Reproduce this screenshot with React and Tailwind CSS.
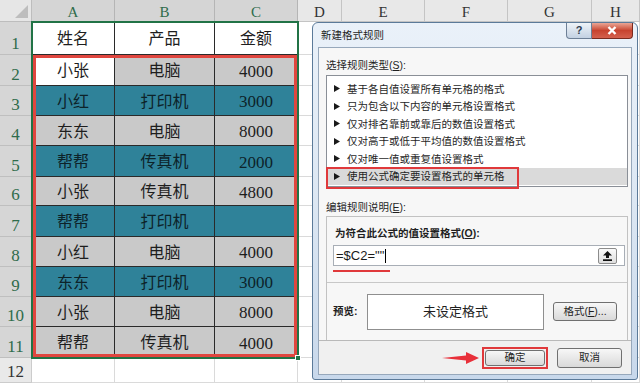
const COLS = [
  { k: 'A', w: 'w-[83px]', sel: true },
  { k: 'B', w: 'w-[100px]', sel: true },
  { k: 'C', w: 'w-[83px]', sel: true },
  { k: 'D', w: 'w-[44px]' },
  { k: 'E', w: 'w-[83px]' },
  { k: 'F', w: 'w-[83px]' },
  { k: 'G', w: 'w-[84px]' },
  { k: 'H', w: 'w-[48px]' },
]

// heights of rows 1..12
const ROW_H = ['h-[33px]', 'h-[31px]', 'h-[30px]', 'h-[30px]', 'h-[31px]', 'h-[29px]', 'h-[31px]', 'h-[30px]', 'h-[30px]', 'h-[30px]', 'h-[31px]', 'h-[25px]']

const DATA = [
  ['姓名', '产品', '金额'],
  ['小张', '电脑', '4000'],
  ['小红', '打印机', '3000'],
  ['东东', '电脑', '8000'],
  ['帮帮', '传真机', '2000'],
  ['小张', '传真机', '4800'],
  ['帮帮', '打印机', ''],
  ['小红', '电脑', '4000'],
  ['东东', '打印机', '3000'],
  ['小张', '电脑', '8000'],
  ['帮帮', '传真机', '4000'],
]

const TEAL_ROWS = [3, 5, 7, 9]

const RULES = [
  '基于各自值设置所有单元格的格式',
  '只为包含以下内容的单元格设置格式',
  '仅对排名靠前或靠后的数值设置格式',
  '仅对高于或低于平均值的数值设置格式',
  '仅对唯一值或重复值设置格式',
  '使用公式确定要设置格式的单元格',
]

function cellTone(r, j) {
  if (r === 1 || (r === 2 && j === 0)) return 'bg-white text-[#1e1e1e]'
  if (TEAL_ROWS.includes(r)) return 'bg-[#2f8299] text-[#0d2329]'
  return 'bg-[#c9c9c9] text-[#1e1e1e]'
}

function Sheet() {
  return (
    <div className="flex flex-col font-['Liberation_Serif','Noto_Sans_CJK_SC',serif]">
      <div className="flex h-[22px]">
        <div className="w-[32px] shrink-0 flex items-end justify-end pr-[3px] pb-[3px] bg-[#e6e6e6] border-r border-b border-[#bdbdbd]">
          <svg width="13" height="13" viewBox="0 0 13 13">
            <polygon points="13,0 13,13 0,13" fill="#bdbdbd" />
          </svg>
        </div>
        {COLS.map((c) => (
          <div
            key={c.k}
            className={`${c.w} shrink-0 flex items-center justify-center pt-[3px] text-[15px] leading-none border-r border-b ${
              c.sel ? 'bg-[#d5d5d5] text-[#2f6c4b] border-[#b5b5b5]' : 'bg-[#e8e8e8] text-[#333333] border-[#c4c4c4]'
            }`}
          >
            {c.k}
          </div>
        ))}
      </div>
      {ROW_H.map((h, i) => {
        const r = i + 1
        const vals = DATA[i]
        return (
          <div key={r} className={`flex ${h}`}>
            <div
              className={`w-[32px] shrink-0 flex items-end justify-center pb-[2px] text-[17px] leading-none border-r border-b ${
                r <= 11 ? 'bg-[#d6d6d6] text-[#2f6c4b] border-[#bfbfbf]' : 'bg-[#e9e9e9] text-[#333333] border-[#cccccc]'
              }`}
            >
              {r}
            </div>
            {COLS.map((c, j) => {
              if (vals && j < 3) {
                return (
                  <div
                    key={c.k}
                    className={`${c.w} shrink-0 flex items-center justify-center pt-[2px] leading-none border-r border-b border-[#2a2a2a] ${cellTone(r, j)} ${
                      j === 2 && r > 1 ? 'text-[17px]' : 'text-[16px]'
                    }`}
                  >
                    {vals[j]}
                  </div>
                )
              }
              return <div key={c.k} className={`${c.w} shrink-0 bg-white border-r border-b border-[#dadada]`} />
            })}
          </div>
        )
      })}
    </div>
  )
}

function Btn({ className, children }) {
  return (
    <div
      className={`flex items-center justify-center rounded-[3px] border border-[#707070] bg-gradient-to-b from-[#f7f7f7] to-[#d9d9d9] text-[10.5px] leading-none text-[#1f1f1f] ${className}`}
    >
      {children}
    </div>
  )
}

function Dialog() {
  return (
    <div className="absolute left-[312px] top-[22px] w-[326px] h-[358px] flex flex-col rounded-t-[6px] rounded-b-[3px] border border-[#5b7a99] bg-gradient-to-b from-[#eaf1f9] via-[#dce7f3] to-[#c8d8eb] font-['Liberation_Sans','Noto_Sans_CJK_SC',sans-serif] text-[10.5px] text-[#1f1f1f]">
      <div className="relative h-[24px] shrink-0">
        <span className="absolute left-[8px] top-[5px] leading-[14px]">新建格式规则</span>
        <div className="absolute right-[4px] top-0 flex">
          <div className="w-[26px] h-[16px] flex items-center justify-center rounded-bl-[4px] border border-t-0 border-[#6d7f96] bg-gradient-to-b from-[#eef3f8] to-[#c3d1e2] text-[11px] font-bold leading-none text-[#2e3c50]">
            ?
          </div>
          <div className="w-[41px] h-[16px] flex items-center justify-center rounded-br-[4px] border border-t-0 border-l-0 border-[#7a2a1e] bg-gradient-to-b from-[#e9a595] via-[#c7432f] to-[#d4604d]">
            <svg width="10" height="9" viewBox="0 0 10 9">
              <path d="M1.5 1 L8.5 8 M8.5 1 L1.5 8" stroke="#ffffff" strokeWidth="2.4" />
            </svg>
          </div>
        </div>
      </div>

      <div className="mx-[5px] mb-[4px] flex-1 flex flex-col border border-[#97a8bb] bg-[#f0f0f0]">
        <div className="h-[293px] shrink-0 flex flex-col px-[7px] bg-[#f7f7f7] border-b border-[#b9b9b9]">
          <div className="mt-[10px] leading-[14px]">
            选择规则类型(<span className="underline">S</span>):
          </div>
          <div className="mt-[3px] w-[302px] h-[112px] pt-[4px] bg-white border border-[#8a8f97]">
            {RULES.map((t, i) => {
              const sel = i === RULES.length - 1
              return (
                <div key={t} className={`relative h-[17.5px] flex items-center gap-[7px] pl-[7px] ${sel ? 'bg-[#dadada]' : ''}`}>
                  <svg width="6" height="7" viewBox="0 0 6 7">
                    <polygon points="0,0 6,3.5 0,7" fill="#1a1a1a" />
                  </svg>
                  <span className="leading-none">{t}</span>
                  {sel && <div className="absolute left-[-1px] top-[-1px] w-[193px] h-[22px] border-2 border-[#e0393b]" />}
                </div>
              )
            })}
          </div>
          <div className="mt-[13px] leading-[14px]">
            编辑规则说明(<span className="underline">E</span>):
          </div>
          <div className="mt-[2px] w-[302px] flex-1 flex flex-col border border-b-0 border-[#c2c2c2]">
            <div className="px-[6px] pt-[9px]">
              <div className="ml-[2px] leading-[14px] font-bold">
                为符合此公式的值设置格式(<span className="underline">O</span>):
              </div>
              <div className="relative mt-[5px] w-[292px] h-[21px] flex items-center pl-[2px] bg-white border border-[#a8aeb6]">
                <span className="text-[13px] leading-none text-[#1a1a1a]">=$C2=""</span>
                <span className="ml-[1px] w-[1px] h-[14px] bg-black" />
                <div className="absolute right-[7px] top-[2px] w-[19px] h-[16px] flex items-center justify-center rounded-[2px] border border-[#8c8c8c] bg-gradient-to-b from-[#fafafa] to-[#dedede]">
                  <svg width="9" height="10" viewBox="0 0 9 10">
                    <polygon points="4.5,0 9,4.5 6,4.5 6,7 3,7 3,4.5 0,4.5" fill="#111111" />
                    <rect x="0" y="8.3" width="9" height="1.7" fill="#111111" />
                  </svg>
                </div>
              </div>
              <div className="mt-[4px] w-[57px] h-[2px] bg-[#e0393b]" />
            </div>
            <div className="mt-[10px] flex-1 flex items-center pl-[6px] border-t border-[#c8c8c8]">
              <div className="w-[34px] font-bold leading-none">预览:</div>
              <div className="w-[177px] h-[36px] flex items-center justify-center bg-white border border-[#8f8f8f] text-[13px] leading-none">
                未设定格式
              </div>
              <Btn className="ml-[9px] w-[64px] h-[19px]">
                格式(<span className="underline">F</span>)...
              </Btn>
            </div>
          </div>
        </div>

        <div className="flex-1 flex items-center justify-end pr-[9px]">
          <svg width="37" height="14" viewBox="0 0 37 14" className="mr-[3px]">
            <polygon points="0,7 24,4.6 24,1 37,7 24,13 24,9.4" fill="#e8303a" />
          </svg>
          <div className="w-[66px] h-[22px] p-[1px] border-2 border-[#e0393b]">
            <Btn className="w-full h-full">确定</Btn>
          </div>
          <Btn className="ml-[9px] w-[65px] h-[20px]">取消</Btn>
        </div>
      </div>
    </div>
  )
}

export default function App() {
  return (
    <div className="relative w-[640px] h-[383px] overflow-hidden bg-white">
      <Sheet />
      {/* selection + annotation outlines over the table */}
      <div className="absolute left-[31px] top-[21px] w-[268px] h-[338px] border-2 border-[#217346]" />
      <div className="absolute left-[33px] top-[55px] w-[264px] h-[302px] border-[3px] border-[#e0463f]" />
      <div className="absolute left-[295px] top-[355px] w-[6px] h-[6px] bg-[#217346] border border-white" />
      <Dialog />
    </div>
  )
}
